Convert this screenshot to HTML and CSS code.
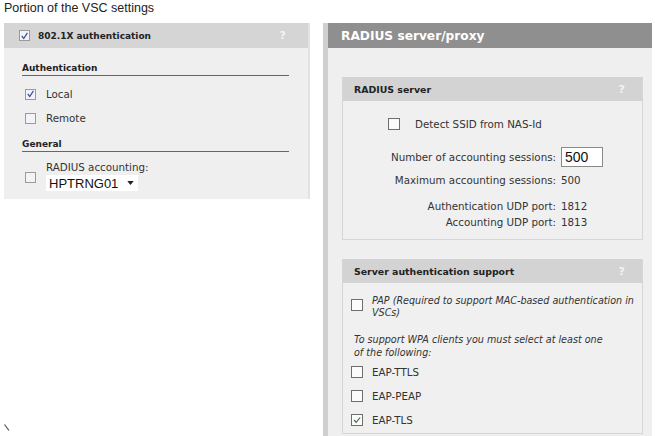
FILE: index.html
```html
<!DOCTYPE html>
<html>
<head>
<meta charset="utf-8">
<link rel="stylesheet" href="styles.css">
</head>
<body>
<div class="page">
  <div class="title">Portion of the VSC settings</div>
  <div class="row">
    <div class="leftcol">
      <div class="lpanel">
        <div class="lhead">
          <span class="cb cb-l"><svg viewBox="0 0 10 10" width="10" height="10"><path d="M2 5 L4.2 7.8 L8.2 1.6" fill="none" stroke="#3a4f9a" stroke-width="1.4"/></svg></span>
          <span class="htext">802.1X authentication</span>
          <span class="help">?</span>
        </div>
        <div class="lbody">
          <div class="sect">Authentication</div>
          <div class="opt opt-first"><span class="cb cb-l"><svg viewBox="0 0 10 10" width="10" height="10"><path d="M2 5 L4.2 7.8 L8.2 1.6" fill="none" stroke="#3a4f9a" stroke-width="1.4"/></svg></span><span>Local</span></div>
          <div class="opt"><span class="cb cb-l"></span><span>Remote</span></div>
          <div class="sect sect2">General</div>
          <div class="acct">
            <span class="cb cb-l"></span>
            <div class="acctcol">
              <span>RADIUS accounting:</span>
              <span class="select">HPTRNG01 <svg viewBox="0 0 8 5" width="7" height="4"><path d="M0 0 H8 L4 5 Z" fill="#222"/></svg></span>
            </div>
          </div>
        </div>
      </div>
      <svg class="mark" viewBox="0 0 6 8" width="6" height="8"><path d="M0.5 0.5 L5 6.5" stroke="#555" stroke-width="1.2"/></svg>
    </div>
    <div class="rpanel">
      <div class="rhead">RADIUS server/proxy</div>
      <div class="rbody">
        <div class="box">
          <div class="bhead"><span>RADIUS server</span><span class="help">?</span></div>
          <div class="bbody1">
            <div class="detect"><span class="cb cb-r"></span><span>Detect SSID from NAS-Id</span></div>
            <div class="grid">
              <span class="lab">Number of accounting sessions:</span><span class="input">500</span>
              <span class="lab g2">Maximum accounting sessions:</span><span class="g2">500</span>
              <span class="lab g3">Authentication UDP port:</span><span class="g3">1812</span>
              <span class="lab">Accounting UDP port:</span><span>1813</span>
            </div>
          </div>
        </div>
        <div class="box box2">
          <div class="bhead"><span>Server authentication support</span><span class="help">?</span></div>
          <div class="bbody2">
            <div class="pap"><span class="cb cb-r"></span><span class="it">PAP (Required to support MAC-based authentication in VSCs)</span></div>
            <div class="it wpa">To support WPA clients you must select at least one of the following:</div>
            <div class="eap eap-first"><span class="cb cb-r"></span><span>EAP-TTLS</span></div>
            <div class="eap"><span class="cb cb-r"></span><span>EAP-PEAP</span></div>
            <div class="eap"><span class="cb cb-r"><svg viewBox="0 0 12 12" width="10" height="10"><path d="M2.5 6 L5 8.8 L9.8 3" fill="none" stroke="#3d6b3d" stroke-width="1.4"/></svg></span><span>EAP-TLS</span></div>
          </div>
        </div>
      </div>
    </div>
  </div>
</div>
</body>
</html>
```
FILE: styles.css
```css
html, body {
  margin: 0;
  padding: 0;
  background: #fff;
  height: 436px;
  overflow: hidden;
}
.page {
  font-family: "DejaVu Sans", Verdana, sans-serif;
  font-size: 10.3px;
  color: #333;
  height: 436px;
  display: flex;
  flex-direction: column;
}
.title {
  font-family: "Liberation Sans", Arial, sans-serif;
  font-size: 12.5px;
  color: #222;
  padding: 0 0 0 4px;
  height: 23px;
  line-height: 16px;
}
.row {
  display: flex;
  flex: 1;
  min-height: 0;
}
.leftcol {
  width: 323px;
  display: flex;
  flex-direction: column;
  padding-left: 4px;
  box-sizing: border-box;
}
.lpanel {
  width: 306px;
  height: 176px;
  background: #efefef;
  border-right: 2px solid #e2e2e2;
  box-sizing: border-box;
}
.lhead {
  height: 25px;
  background: #d5d5d5;
  display: flex;
  align-items: center;
  padding: 0 22px 0 15px;
}
.htext {
  font-weight: bold;
  font-size: 9px;
  color: #222;
  margin-left: 8px;
}
.help {
  margin-left: auto;
  color: #f4f4f4;
  font-weight: bold;
  font-size: 11px;
}
.cb {
  display: inline-flex;
  align-items: center;
  justify-content: center;
  box-sizing: border-box;
  background: #fafafa;
  flex: none;
}
.cb-l {
  width: 11px;
  height: 11px;
  border: 1px solid #9a9a9a;
  background: #f3f3f7;
}
.cb-r {
  width: 12px;
  height: 12px;
  border: 1px solid #6e6e6e;
  background: #fbfbfb;
}
.lbody {
  padding: 15px 19px 0 18px;
}
.sect {
  font-weight: bold;
  font-size: 9px;
  color: #222;
  border-bottom: 1px solid #666;
  line-height: 11px;
  padding-bottom: 1px;
}
.sect2 {
  margin-top: 14px;
}
.opt {
  display: flex;
  align-items: center;
  gap: 10px;
  margin-left: 3px;
  height: 14px;
  margin-top: 10px;
}
.opt-first {
  margin-top: 11px;
}
.acct {
  display: flex;
  align-items: flex-end;
  gap: 10px;
  margin-left: 3px;
  margin-top: 9px;
}
.acct .cb {
  margin-bottom: 8px;
}
.acctcol {
  display: flex;
  flex-direction: column;
  gap: 2px;
}
.select {
  display: inline-flex;
  align-items: center;
  gap: 9px;
  background: #fff;
  font-family: "Liberation Sans", Arial, sans-serif;
  font-size: 13px;
  color: #111;
  height: 16px;
  padding: 0 4px 0 3px;
  width: max-content;
}
.mark {
  margin-top: auto;
  margin-bottom: 4px;
}
.rpanel {
  width: 324px;
  border-left: 5px solid #cfcfcf;
  background: #efefef;
  display: flex;
  flex-direction: column;
}
.rhead {
  height: 25px;
  background: #8f8f8f;
  color: #fff;
  font-weight: bold;
  font-size: 12.2px;
  display: flex;
  align-items: center;
  padding-left: 13px;
}
.rbody {
  padding: 29px 9px 0 14px;
  flex: 1;
}
.box {
  border: 1px solid #d6d6d6;
  border-top: none;
  background: #f0f0f0;
}
.box2 {
  margin-top: 19px;
}
.bhead {
  height: 24px;
  background: #d3d3d3;
  display: flex;
  align-items: center;
  padding: 0 17px 0 11px;
  font-weight: bold;
  font-size: 9.4px;
  color: #222;
}
.bbody1 {
  padding: 17px 0 11px 0;
}
.detect {
  display: flex;
  align-items: center;
  gap: 15px;
  margin-left: 45px;
}
.grid {
  display: grid;
  grid-template-columns: 213px auto;
  column-gap: 5px;
  align-items: center;
  margin-top: 17px;
  row-gap: 4px;
  line-height: 12px;
}
.lab {
  text-align: right;
}
.g2 {
  margin-top: 3px;
}
.g3 {
  margin-top: 10px;
}
.input {
  width: 42px;
  height: 20px;
  box-sizing: border-box;
  border: 1px solid #8a8a8a;
  background: #fff;
  font-family: "Liberation Sans", Arial, sans-serif;
  font-size: 14px;
  color: #111;
  padding-left: 3px;
  line-height: 18px;
}
.bbody2 {
  padding: 12px 8px 6px 8px;
}
.it {
  font-style: italic;
  font-size: 9.6px;
}
.pap {
  display: flex;
  align-items: flex-start;
  gap: 9px;
  line-height: 12px;
}
.pap .cb {
  margin-top: 4px;
}
.wpa {
  margin-top: 14px;
  line-height: 13px;
  padding-left: 3px;
  width: 258px;
}
.eap {
  display: flex;
  align-items: center;
  gap: 9px;
  margin-top: 10px;
  height: 14px;
}
.eap-first {
  margin-top: 6px;
}
```
